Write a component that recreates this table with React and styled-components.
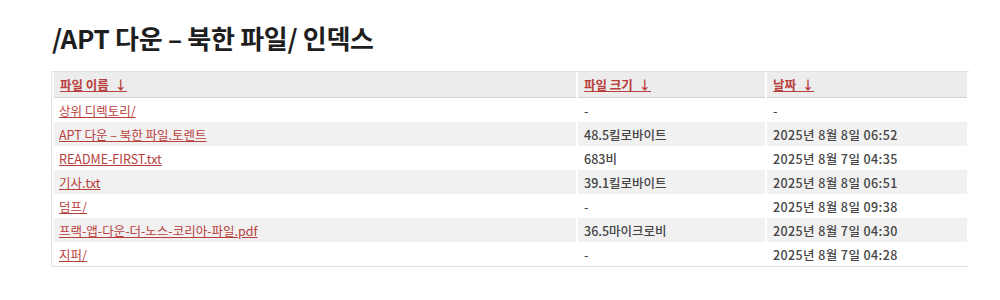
import React from "react";
import styled, { createGlobalStyle } from "styled-components";

const GlobalStyle = createGlobalStyle`
  body {
    margin: 0;
    background: #ffffff;
    font-family: "Noto Sans CJK KR", "Noto Sans", sans-serif;
    color: #333;
  }
`;

const files = [
  { name: "상위 디렉토리/", size: "-", date: "-" },
  { name: "APT 다운 – 북한 파일.토렌트", size: "48.5킬로바이트", date: "2025년 8월 8일 06:52" },
  { name: "README-FIRST.txt", size: "683비", date: "2025년 8월 7일 04:35" },
  { name: "기사.txt", size: "39.1킬로바이트", date: "2025년 8월 8일 06:51" },
  { name: "덤프/", size: "-", date: "2025년 8월 8일 09:38" },
  { name: "프랙-앱-다운-더-노스-코리아-파일.pdf", size: "36.5마이크로비", date: "2025년 8월 7일 04:30" },
  { name: "지퍼/", size: "-", date: "2025년 8월 7일 04:28" },
];

const App = () => {
  return (
    <Page>
      <GlobalStyle />
      <Title>/APT 다운 – 북한 파일/ 인덱스</Title>
      <Table>
        <colgroup>
          <col style={{ width: 522 }} />
          <col style={{ width: 187 }} />
          <col />
        </colgroup>
        <thead>
          <tr>
            <HeadCell><Link href="#">파일 이름 &nbsp;↓</Link></HeadCell>
            <HeadCell><Link href="#">파일 크기 &nbsp;↓</Link></HeadCell>
            <HeadCell><Link href="#">날짜 &nbsp;↓</Link></HeadCell>
          </tr>
        </thead>
        <tbody>
          {files.map((f, i) => (
            <Row key={i} $shaded={i % 2 === 1}>
              <Cell><Link href="#">{f.name}</Link></Cell>
              <Cell>{f.size}</Cell>
              <Cell $wide>{f.date}</Cell>
            </Row>
          ))}
        </tbody>
      </Table>
    </Page>
  );
};

export default App;

const Page = styled.div`
  padding: 20px 32px 0 51px;
`;

const Title = styled.h1`
  margin: 0 0 15px 1px;
  font-size: 26px;
  font-weight: 700;
  color: #1e1e1e;
  line-height: 36px;
  letter-spacing: -0.3px;
`;

const Table = styled.table`
  width: 918px;
  border-collapse: separate;
  border-spacing: 2px 0;
  border: 1px solid #e2e2e2;
  border-right: none;
  table-layout: fixed;
  font-size: 12.5px;
`;

const HeadCell = styled.th`
  background: #ececec;
  height: 25px;
  padding: 0 6px;
  text-align: left;
  border-bottom: 1px solid #d0d0d0;
  a {
    font-weight: 700;
  }
`;

const Row = styled.tr`
  background: ${(p) => (p.$shaded ? "#f1f1f1" : "#ffffff")};
`;

const Cell = styled.td`
  height: 24px;
  padding: 0 6px;
  color: #444;
  font-weight: 500;
  white-space: nowrap;
  letter-spacing: ${(p) => (p.$wide ? "0.4px" : "0")};
  &:first-child {
    padding-left: 5px;
  }
`;

const Link = styled.a`
  color: #b8403c;
  text-decoration: underline;
  font-weight: 400;
`;
